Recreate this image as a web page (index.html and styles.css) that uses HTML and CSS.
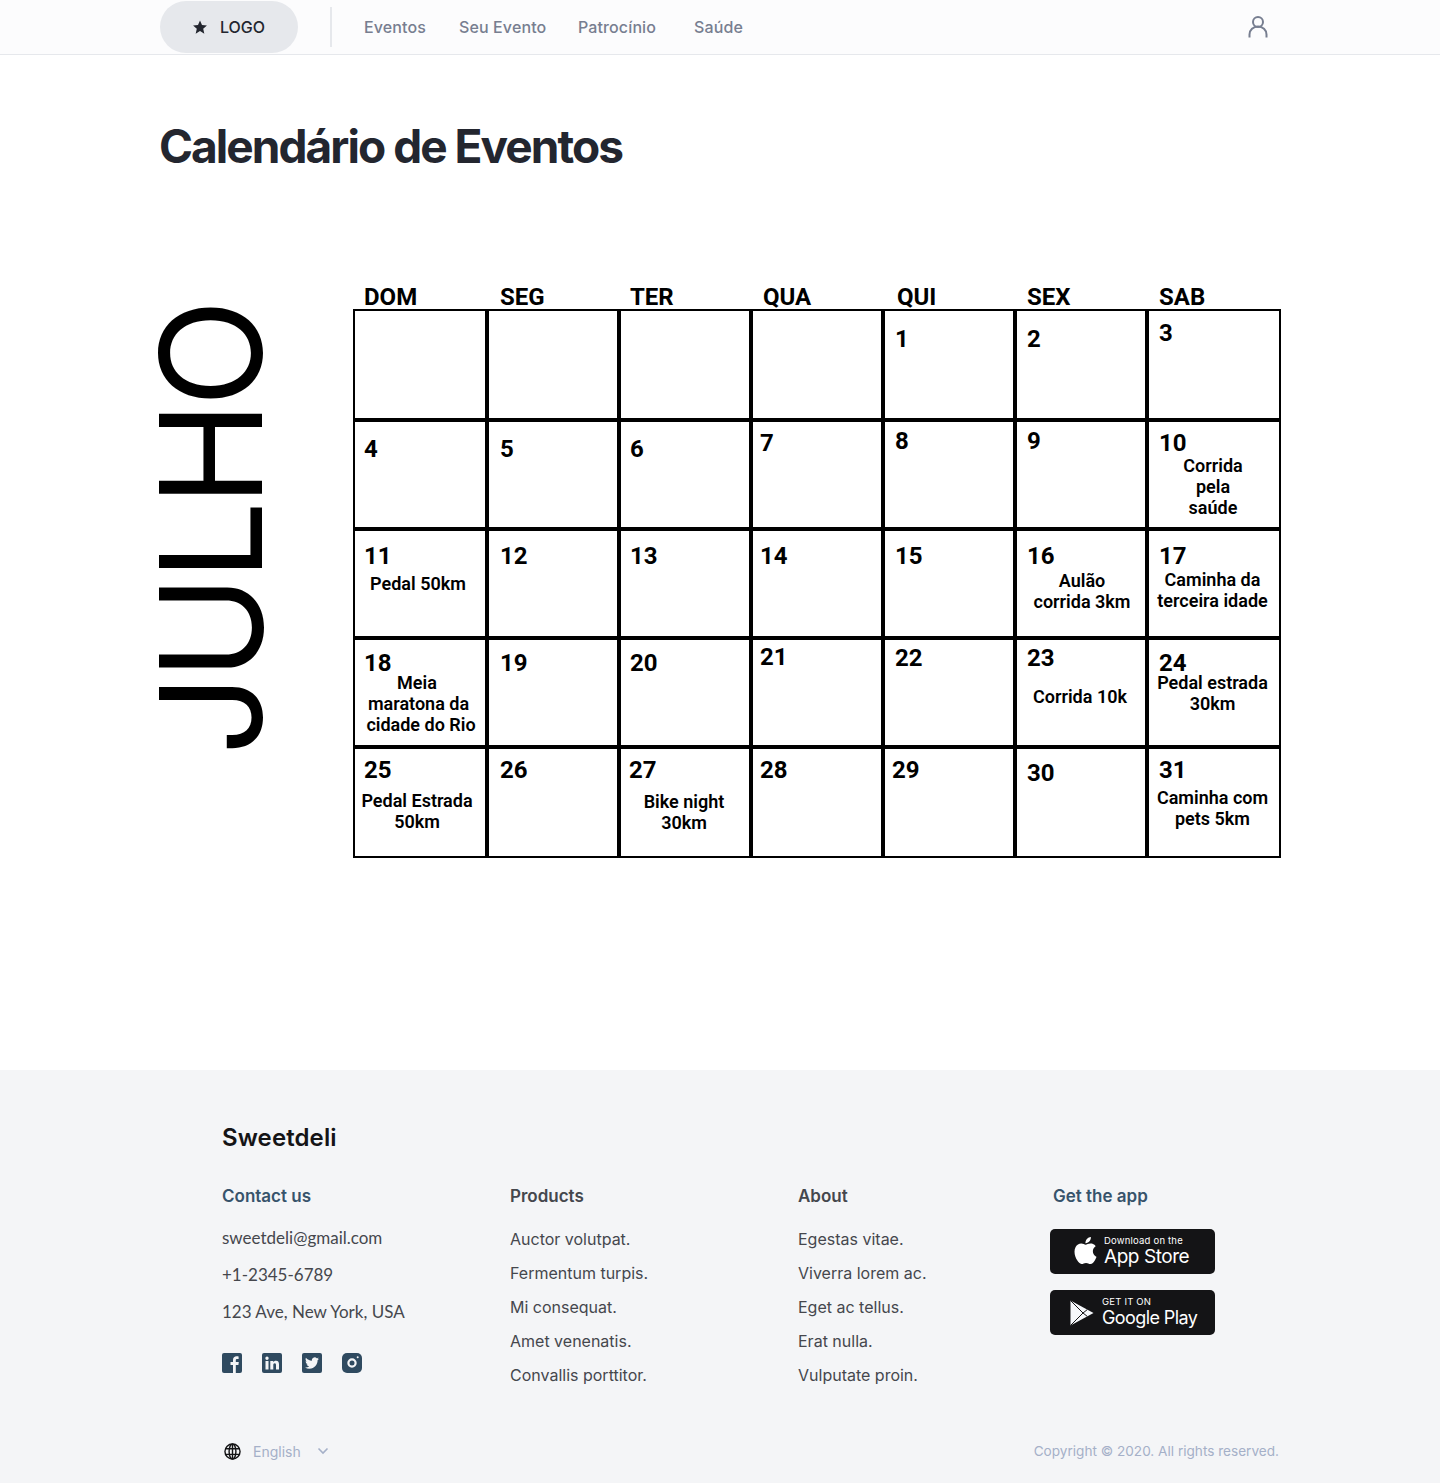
FILE: index.html
```html
<!DOCTYPE html>
<html lang="pt-BR">
<head>
<meta charset="utf-8">
<title>Calendário de Eventos</title>
<link rel="stylesheet" href="styles.css">
</head>
<body>
<header class="topbar">
  <div class="topbar-in">
    <a class="logo"><svg class="star" viewBox="0 0 24 24"><path d="M12 2.2l3 6.9 7.4.7-5.6 4.9 1.7 7.3-6.5-3.9-6.5 3.9 1.7-7.3L1.600 9.800l7.400-.7z"/></svg>LOGO</a>
    <span class="divider"></span>
    <nav class="menu">
      <a class="m1">Eventos</a><a class="m2">Seu Evento</a><a class="m3">Patrocínio</a><a class="m4">Saúde</a>
    </nav>
    <svg class="user" viewBox="0 0 20 24"><circle cx="10" cy="7" r="5"/><path d="M1.500 22.500v-3a8.500 8 0 0 1 17 0v3"/></svg>
  </div>
</header>

<main class="page">
  <h1 class="title">Calendário de Eventos</h1>
  <section class="month">
    <div class="month-name">JULHO</div>
    <div class="cal">
      <div class="cal-head">
        <span class="h1">DOM</span><span class="h2">SEG</span><span class="h3">TER</span><span class="h4">QUA</span><span class="h5">QUI</span><span class="h6">SEX</span><span class="h7">SAB</span>
      </div>
      <div class="cal-grid">
        <div class="cell"></div><div class="cell"></div><div class="cell"></div><div class="cell"></div>
        <div class="cell d1"><b>1</b></div>
        <div class="cell d2"><b>2</b></div>
        <div class="cell d3"><b>3</b></div>

        <div class="cell d4"><b>4</b></div>
        <div class="cell d5"><b>5</b></div>
        <div class="cell d6"><b>6</b></div>
        <div class="cell d7"><b>7</b></div>
        <div class="cell d8"><b>8</b></div>
        <div class="cell d9"><b>9</b></div>
        <div class="cell d10"><b>10</b><p>Corrida<br>pela<br>saúde</p></div>

        <div class="cell d11"><b>11</b><p>Pedal 50km</p></div>
        <div class="cell d12"><b>12</b></div>
        <div class="cell d13"><b>13</b></div>
        <div class="cell d14"><b>14</b></div>
        <div class="cell d15"><b>15</b></div>
        <div class="cell d16"><b>16</b><p>Aulão<br>corrida 3km</p></div>
        <div class="cell d17"><b>17</b><p>Caminha da<br>terceira idade</p></div>

        <div class="cell d18"><b>18</b><p><span class="l1">Meia</span><span class="l2">maratona da</span><span class="l3">cidade do Rio</span></p></div>
        <div class="cell d19"><b>19</b></div>
        <div class="cell d20"><b>20</b></div>
        <div class="cell d21"><b>21</b></div>
        <div class="cell d22"><b>22</b></div>
        <div class="cell d23"><b>23</b><p>Corrida 10k</p></div>
        <div class="cell d24"><b>24</b><p>Pedal estrada<br>30km</p></div>

        <div class="cell d25"><b>25</b><p>Pedal Estrada<br>50km</p></div>
        <div class="cell d26"><b>26</b></div>
        <div class="cell d27"><b>27</b><p>Bike night<br>30km</p></div>
        <div class="cell d28"><b>28</b></div>
        <div class="cell d29"><b>29</b></div>
        <div class="cell d30"><b>30</b></div>
        <div class="cell d31"><b>31</b><p>Caminha com<br>pets 5km</p></div>
      </div>
    </div>
  </section>
</main>

<footer class="footer">
  <div class="brand">Sweetdeli</div>
  <div class="cols">
    <div class="col col-contact">
      <h4 class="blue">Contact us</h4>
      <ul class="contact">
        <li>sweetdeli@gmail.com</li>
        <li>+1-2345-6789</li>
        <li>123 Ave, New York, USA</li>
      </ul>
      <div class="social">
        <svg viewBox="0 0 20 20"><rect width="20" height="20" rx="2" class="sq"/><path class="wh" d="M11 20v-8H8.500V9H11V7c0-2.500 1.500-3.700 3.600-3.700.9 0 1.700.1 2 .1v2.700h-1.500c-1.100 0-1.300.6-1.300 1.300V9h3l-.4 3h-2.600v8z"/></svg>
        <svg viewBox="0 0 20 20"><rect width="20" height="20" rx="2" class="sq"/><path class="wh" d="M3.500 8h3v8.500h-3zM5 3.500a1.700 1.700 0 1 1 0 3.400 1.700 1.700 0 0 1 0-3.400zM8.300 8h2.900v1.200c.5-.8 1.500-1.400 2.800-1.400 2.400 0 3 1.600 3 3.800v4.900h-3v-4.300c0-1.100-.2-2-1.300-2s-1.400.9-1.400 2v4.300h-3z"/></svg>
        <svg viewBox="0 0 20 20"><rect width="20" height="20" rx="2" class="sq"/><path class="wh" transform="translate(3 3) scale(.583)" d="M23.953 4.570a10 10 0 01-2.825.775 4.958 4.958 0 002.163-2.723c-.951.555-2.005.959-3.127 1.184a4.920 4.920 0 00-8.384 4.482C7.690 8.095 4.067 6.130 1.640 3.162a4.822 4.822 0 00-.666 2.475c0 1.710.870 3.213 2.188 4.096a4.904 4.904 0 01-2.228-.616v.060a4.923 4.923 0 003.946 4.827 4.996 4.996 0 01-2.212.085 4.936 4.936 0 004.604 3.417 9.867 9.867 0 01-6.102 2.105c-.390 0-.779-.023-1.170-.067a13.995 13.995 0 007.557 2.209c9.053 0 13.998-7.496 13.998-13.985 0-.210 0-.420-.015-.630A9.935 9.935 0 0024 4.590z"/></svg>
        <svg viewBox="0 0 20 20"><rect width="20" height="20" rx="5" class="sq"/><circle cx="10" cy="10" r="3.600" class="ring"/><circle cx="15.700" cy="4.300" r="1" class="wh"/></svg>
      </div>
    </div>
    <div class="col col-products">
      <h4>Products</h4>
      <ul class="links">
        <li>Auctor volutpat.</li><li>Fermentum turpis.</li><li>Mi consequat.</li><li>Amet venenatis.</li><li>Convallis porttitor.</li>
      </ul>
    </div>
    <div class="col col-about">
      <h4>About</h4>
      <ul class="links">
        <li>Egestas vitae.</li><li>Viverra lorem ac.</li><li>Eget ac tellus.</li><li>Erat nulla.</li><li>Vulputate proin.</li>
      </ul>
    </div>
    <div class="col col-app">
      <h4 class="blue app-title">Get the app</h4>
      <a class="badge">
        <svg class="apple" viewBox="0 0 24 24"><path d="M12.152 6.896c-.948 0-2.415-1.078-3.960-1.040-2.040.027-3.910 1.183-4.961 3.014-2.117 3.675-.546 9.103 1.519 12.090 1.013 1.454 2.208 3.090 3.792 3.039 1.520-.065 2.090-.987 3.935-.987 1.831 0 2.350.987 3.960.948 1.637-.026 2.676-1.480 3.676-2.948 1.156-1.688 1.636-3.325 1.662-3.415-.039-.013-3.182-1.221-3.220-4.857-.026-3.040 2.480-4.494 2.597-4.559-1.429-2.090-3.623-2.324-4.390-2.376-2-.156-3.675 1.090-4.610 1.090zM15.530 3.830c.843-1.012 1.400-2.427 1.245-3.830-1.207.052-2.662.805-3.532 1.818-.780.896-1.454 2.338-1.273 3.714 1.338.104 2.715-.688 3.559-1.701"/></svg>
        <span class="badge-txt"><small>Download on the</small><strong>App Store</strong></span>
      </a>
      <a class="badge badge-play">
        <svg class="play" viewBox="0 0 24 26"><path d="M.5.500L23.500 13 .5 25.500z" class="pf"/><path d="M.5.500L13 13 .5 25.500M17.300 9.600L13 13l4.300 3.400" class="ps"/></svg>
        <span class="badge-txt"><small>GET IT ON</small><strong>Google Play</strong></span>
      </a>
    </div>
  </div>
  <div class="foot-bottom">
    <div class="lang">
      <svg class="globe" viewBox="0 0 18 18"><circle cx="9" cy="9" r="8"/><ellipse cx="9" cy="9" rx="3.600" ry="8"/><path d="M1.500 6h15M1.500 12h15M9 1v16"/></svg>
      <span>English</span>
      <svg class="chev" viewBox="0 0 12 8"><path d="M1.500 1.500L6 6l4.500-4.500"/></svg>
    </div>
    <div class="copy">Copyright © 2020. All rights reserved.</div>
  </div>
</footer>
</body>
</html>
```
FILE: styles.css
```css
* { box-sizing: border-box; }
html, body { margin: 0; padding: 0; }
body { background: #fff; font-family: "Inter", sans-serif; color: #23262f; }

.topbar { height: 55px; background: #fcfcfd; border-bottom: 1px solid #e6e8ec; }
.topbar-in { width: 1120px; height: 54px; margin: 0 auto; display: flex; align-items: center; }
.logo { width: 138px; height: 52px; border-radius: 26px; background: #e6e8ec; display: flex; align-items: center; padding-left: 32px; font-size: 16px; font-weight: 500; color: #23262f; }
.star { width: 16px; height: 16px; margin-right: 12px; fill: #23262f; }
.divider { width: 2px; height: 40px; background: #e6e8ec; margin-left: 32px; }
.menu { display: flex; font-size: 16px; font-weight: 500; letter-spacing: .12px; color: #777e90; margin-left: 32px; flex: 1; }
.m1 { width: 95px; } .m2 { width: 119px; } .m3 { width: 116px; }
.user { width: 20px; height: 24px; margin-right: 12px; fill: none; stroke: #777e90; stroke-width: 2; }

.page { width: 1120px; margin: 0 auto; height: 1015px; padding-top: 63px; }
.title { margin: 0 0 0 -1px; font-size: 46px; line-height: 56px; font-weight: 700; letter-spacing: -1.950px; color: #23262f; }
.month { display: flex; margin-top: 109px; }
.month-name { writing-mode: vertical-rl; transform: rotate(180deg); width: 108px; height: 448px; margin: 24px 0 0 -3px; font-size: 141px; line-height: 108px; font-weight: 400; color: #000; text-align: left; letter-spacing: -5.500px; font-family: "Inter", sans-serif; }
.cal { margin-left: 88px; width: 928px; font-family: "Roboto", sans-serif; color: #000; }
.cal-head { display: grid; grid-template-columns: 134px repeat(5, 132px) 134px; height: 26px; font-size: 24px; font-weight: 700; line-height: 28px; }
.h1 { padding-left: 11px; } .h2 { padding-left: 13px; } .h3 { padding-left: 11px; } .h4 { padding-left: 12px; } .h5 { padding-left: 14px; } .h6 { padding-left: 12px; } .h7 { padding-left: 12px; }

.cal-grid { display: grid; grid-template-columns: 134px repeat(5, 132px) 134px; grid-template-rows: 111px 109px 109px 109px 111px; }
.cell { border: 2px solid #000; overflow: hidden; }
.cell b { display: block; font-size: 24px; line-height: 28px; font-weight: 700; }
.cell p { margin: 0; font-size: 18px; line-height: 21px; font-weight: 600; text-align: center; white-space: nowrap; width: 130px; }
.cell span { display: block; }
.l1 { margin-left: -6px; } .l2 { margin-left: -3px; } .l3 { margin-left: 2px; }

.d1 b { padding: 14px 0 0 10px; } .d2 b { padding: 14px 0 0 10px; } .d3 b { padding: 8px 0 0 10px; }
.d4 b { padding: 13px 0 0 9px; } .d5 b { padding: 13px 0 0 11px; } .d6 b { padding: 13px 0 0 9px; } .d7 b { padding: 7px 0 0 7px; }
.d8 b { padding: 5px 0 0 10px; } .d9 b { padding: 5px 0 0 10px; } .d10 b { padding: 7px 0 0 10px; }
.d11 b { padding: 11px 0 0 9px; } .d12 b { padding: 11px 0 0 11px; } .d13 b { padding: 11px 0 0 9px; } .d14 b { padding: 11px 0 0 7px; }
.d15 b { padding: 11px 0 0 10px; } .d16 b { padding: 11px 0 0 10px; } .d17 b { padding: 11px 0 0 10px; }
.d18 b { padding: 9px 0 0 9px; } .d19 b { padding: 9px 0 0 11px; } .d20 b { padding: 9px 0 0 9px; } .d21 b { padding: 3px 0 0 7px; }
.d22 b { padding: 4px 0 0 10px; } .d23 b { padding: 4px 0 0 10px; } .d24 b { padding: 9px 0 0 10px; }
.d25 b { padding: 7px 0 0 9px; } .d26 b { padding: 7px 0 0 11px; } .d27 b { padding: 7px 0 0 8px; } .d28 b { padding: 7px 0 0 7px; }
.d29 b { padding: 7px 0 0 7px; } .d30 b { padding: 10px 0 0 10px; } .d31 b { padding: 7px 0 0 10px; }

.d10 p { margin: -2px 0 0 -1px; }
.d11 p { margin: 3px 0 0 -2px; }
.d16 p { margin: 0; }
.d17 p { margin: -1px 0 0 -1.500px; }
.d18 p { margin: -5px 0 0 0; }
.d23 p { margin: 14px 0 0 -2px; }
.d24 p { margin: -5px 0 0 -1.500px; }
.d25 p { margin: 6px 0 0 -3px; }
.d27 p { margin: 7px 0 0 -2px; }
.d31 p { margin: 3px 0 0 -1.500px; }

.footer { height: 413px; background: #f4f5f7; padding: 52px 161px 0 222px; }
.brand { font-size: 24px; line-height: 32px; font-weight: 600; letter-spacing: .1px; color: #141416; }
.cols { display: flex; margin-top: 32px; height: 228px; }
.col h4 { margin: 0; font-size: 17px; line-height: 20px; font-weight: 600; color: #45474d; }
.col h4.blue { color: #37536b; }
.col ul { list-style: none; margin: 0; padding: 0; }
.col-contact { width: 288px; } .col-products { width: 288px; } .col-about { width: 252px; }
.col .contact { margin-top: 13px; font-family: "Lato", sans-serif; font-size: 17px; line-height: 37px; color: #45474d; }
.col .links { margin-top: 16px; font-family: "Inter", sans-serif; font-size: 16px; line-height: 34px; color: #45474d; }
.social { display: flex; gap: 20px; margin-top: 23px; }
.social svg { width: 20px; height: 20px; }
.sq { fill: #2f4a60; } .wh { fill: #f4f5f7; } .ring { fill: none; stroke: #f4f5f7; stroke-width: 2.200; }
.col-app { margin-left: 3px; }
.col .app-title { margin-bottom: 23px; }
.col-app .badge { margin-left: -3px; }
.badge { width: 165px; height: 45px; border-radius: 5px; background: #141416; display: flex; align-items: center; padding-left: 22px; color: #fff; }
.badge-play { margin-top: 16px; padding-left: 20px; }
.apple { width: 27px; height: 27px; fill: #fff; margin-right: 5px; margin-top: -3px; }
.play { width: 24px; height: 26px; margin-right: 8px; }
.pf { fill: #f6f8fb; } .ps { fill: none; stroke: #141416; stroke-width: 1; }
.badge-txt { display: flex; flex-direction: column; font-family: "Inter", sans-serif; }
.badge-txt small { font-size: 9.500px; line-height: 10px; letter-spacing: .2px; }
.badge-txt strong { font-size: 19px; line-height: 21px; font-weight: 400; letter-spacing: -.45px; }
.badge-play strong { font-size: 18px; letter-spacing: -.6px; }
.foot-bottom { display: flex; justify-content: space-between; align-items: center; height: 20px; margin-top: 27px; font-size: 13.600px; color: #a5b0c8; }
.lang { display: flex; align-items: center; padding-left: 2px; font-size: 14px; }
.globe { width: 17px; height: 17px; margin-right: 12px; fill: none; stroke: #141416; stroke-width: 1.500; }
.chev { width: 12px; height: 8px; margin-left: 16px; fill: none; stroke: #a5b0c8; stroke-width: 1.600; }
```
